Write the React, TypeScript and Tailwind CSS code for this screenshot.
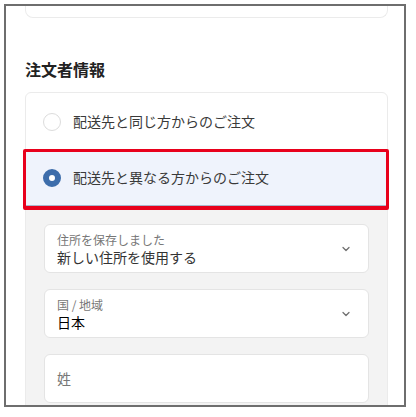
import { ChevronDown } from "lucide-react";

const FONT = { fontFamily: '"Noto Sans CJK JP", "Noto Sans", sans-serif' };

function Radio({ checked }: { checked?: boolean }) {
  return checked ? (
    <span className="w-[18px] h-[18px] rounded-full border-[6px] border-[#3d6dab] bg-white flex-shrink-0" />
  ) : (
    <span className="w-[18px] h-[18px] rounded-full border border-[#dcdcdc] bg-white flex-shrink-0" />
  );
}

function SelectField({ label, value, dark }: { label: string; value: string; dark?: boolean }) {
  return (
    <div className="h-[49px] rounded-md border border-[#e4e4e4] bg-white flex items-center pl-3 pr-4">
      <div className="flex-1 flex flex-col">
        <span className="text-[12px] leading-[16px] text-[#777]">{label}</span>
        <span className={`text-[14px] leading-[18px] ${dark ? "text-black" : "text-[#333]"}`}>{value}</span>
      </div>
      <ChevronDown size={12} strokeWidth={2.5} className="text-[#6f6f6f]" />
    </div>
  );
}

export default function App() {
  return (
    <div className="w-[416px] h-[417px] bg-white p-1" style={FONT}>
      <div className="w-[402px] h-[403px] border-2 border-[#6e6e6e] overflow-hidden pl-[19px]">
        <div className="w-[363px]">
          {/* previous section card, cut off at the top */}
          <div className="h-[12px] border-x border-b border-[#ebebeb] rounded-b-lg" />

          <h2 className="mt-[39px] mb-[11px] text-[16px] leading-[24px] font-bold text-[#222]">注文者情報</h2>

          <div className="border border-[#ebebeb] rounded-t-md">
            <div className="h-[57px] flex items-center gap-3 pl-[17px]">
              <Radio />
              <span className="text-[14px] text-[#3a3a3a]">配送先と同じ方からのご注文</span>
            </div>

            <div className="relative h-[56px] flex items-center gap-3 pl-[17px] bg-[#eff3fc] border-b border-[#a9b6cb]">
              <Radio checked />
              <span className="text-[14px] text-[#3a3a3a]">配送先と異なる方からのご注文</span>
              <div className="absolute -top-[1px] -left-[3px] -right-[2px] -bottom-[5px] border-[3px] border-b-4 border-[#e8001c] rounded-[2px]" />
            </div>

            <div className="bg-[#f3f3f3] px-[18px] pt-[18px] pb-6 flex flex-col gap-4">
              <SelectField label="住所を保存しました" value="新しい住所を使用する" />
              <SelectField label="国 / 地域" value="日本" dark />
              <div className="h-[49px] rounded-md border border-[#e4e4e4] bg-white flex items-center px-3">
                <span className="text-[14px] text-[#777]">姓</span>
              </div>
            </div>
          </div>
        </div>
      </div>
    </div>
  );
}
